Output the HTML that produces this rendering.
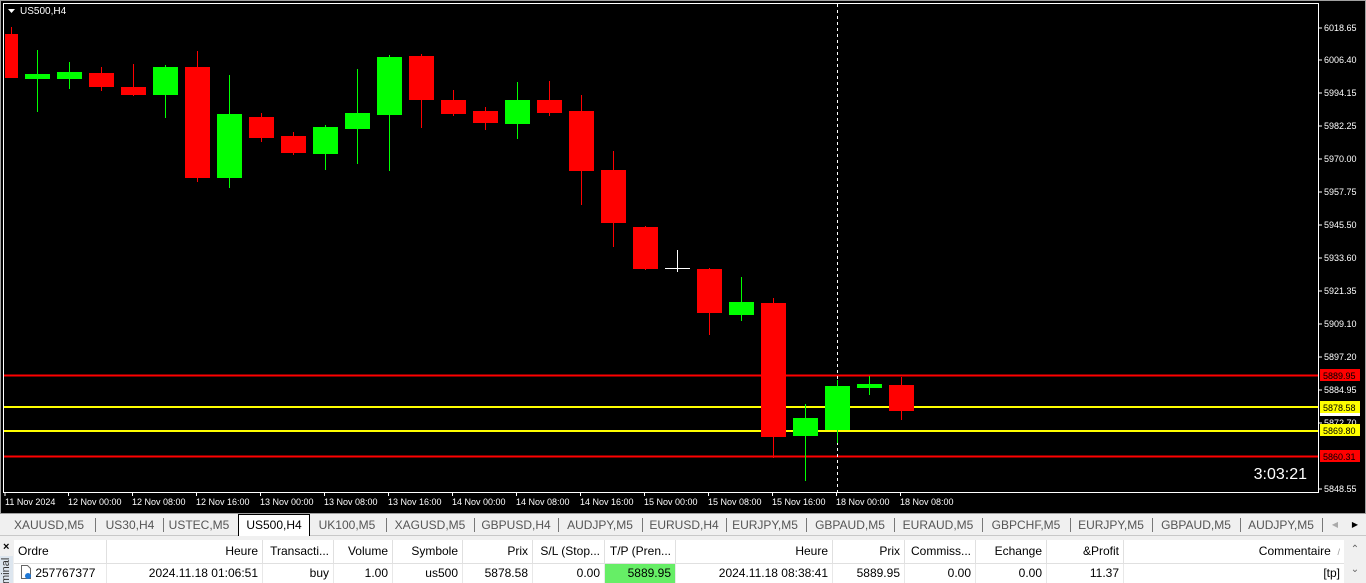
<!DOCTYPE html>
<html><head><meta charset="utf-8"><style>
*{margin:0;padding:0;box-sizing:border-box}
body{width:1366px;height:583px;overflow:hidden;background:#f0f0f0;font-family:"Liberation Sans",sans-serif;font-size:12px;position:relative}
svg{position:absolute;left:0;top:0}
.tabs{position:absolute;top:514px;left:0;width:1366px;height:22px;background:#f0f0f0;border-bottom:1px solid #c8c8c8}
.tab{position:absolute;top:3px;height:16px;color:#555;font-size:12px;line-height:16px;text-align:center}
.sep{position:absolute;top:4px;width:1px;height:14px;background:#777}
.act{position:absolute;left:238px;top:0;width:72px;height:22px;background:#fff;border:1px solid #000;border-bottom:none;text-align:center;line-height:20px;color:#000}
.tbl{position:absolute;top:540px;left:14px;width:1330px;height:43px;background:#fff}
.c{position:absolute;height:24px;line-height:23px;padding:0 4px;white-space:nowrap;overflow:hidden;font-size:12px;color:#000;border-right:1px solid #e0e0e0;text-align:right}
.r{top:24px;height:19px;line-height:18px;border-right:1px solid #e8e8e8}
</style></head><body>
<svg width="1366" height="514" xmlns="http://www.w3.org/2000/svg" font-family="Liberation Sans" font-size="9">
<rect x="0" y="0" width="1366" height="514" fill="#000"/>
<rect x="0" y="0" width="1366" height="514" fill="none" stroke="#a0a0a0" stroke-width="2"/>
<rect x="3.5" y="3.5" width="1315" height="489" fill="none" stroke="#fff"/>
<polygon points="8,9 15,9 11.5,13" fill="#fff"/>
<text x="20" y="14" fill="#fff" font-size="10">US500,H4</text>
<!-- horizontal lines -->
<line x1="4" y1="375.5" x2="1318" y2="375.5" stroke="#f00" stroke-width="2"/>
<line x1="4" y1="407" x2="1318" y2="407" stroke="#ff0" stroke-width="2"/>
<line x1="4" y1="431" x2="1318" y2="431" stroke="#ff0" stroke-width="2"/>
<line x1="4" y1="456.5" x2="1318" y2="456.5" stroke="#f00" stroke-width="2"/>
<line x1="837.5" y1="4" x2="837.5" y2="492" stroke="#fff" stroke-dasharray="3,3"/>
<g stroke-width="1">
<!-- red -->
<g fill="#f00" stroke="#f00">
<line x1="11.5" y1="27" x2="11.5" y2="78"/><rect x="5" y="34" width="13" height="44" stroke="none"/>
<line x1="101.5" y1="67" x2="101.5" y2="91"/><rect x="89" y="73" width="25" height="14" stroke="none"/>
<line x1="133.5" y1="64" x2="133.5" y2="96"/><rect x="121" y="87" width="25" height="8" stroke="none"/>
<line x1="197.5" y1="51" x2="197.5" y2="182"/><rect x="185" y="67" width="25" height="111" stroke="none"/>
<line x1="261.5" y1="113" x2="261.5" y2="142"/><rect x="249" y="117" width="25" height="21" stroke="none"/>
<line x1="293.5" y1="132" x2="293.5" y2="155"/><rect x="281" y="136" width="25" height="17" stroke="none"/>
<line x1="421.5" y1="54" x2="421.5" y2="128"/><rect x="409" y="56" width="25" height="44" stroke="none"/>
<line x1="453.5" y1="90" x2="453.5" y2="116"/><rect x="441" y="100" width="25" height="14" stroke="none"/>
<line x1="485.5" y1="107" x2="485.5" y2="130"/><rect x="473" y="111" width="25" height="12" stroke="none"/>
<line x1="549.5" y1="81" x2="549.5" y2="116"/><rect x="537" y="100" width="25" height="13" stroke="none"/>
<line x1="581.5" y1="95" x2="581.5" y2="205"/><rect x="569" y="111" width="25" height="60" stroke="none"/>
<line x1="613.5" y1="151" x2="613.5" y2="247"/><rect x="601" y="170" width="25" height="53" stroke="none"/>
<line x1="645.5" y1="226" x2="645.5" y2="270"/><rect x="633" y="227" width="25" height="42" stroke="none"/>
<line x1="709.5" y1="268" x2="709.5" y2="335"/><rect x="697" y="269" width="25" height="44" stroke="none"/>
<line x1="773.5" y1="298" x2="773.5" y2="458"/><rect x="761" y="303" width="25" height="134" stroke="none"/>
<line x1="901.5" y1="377" x2="901.5" y2="420"/><rect x="889" y="385" width="25" height="26" stroke="none"/>
</g>
<g fill="#0f0" stroke="#0f0">
<line x1="37.5" y1="50" x2="37.5" y2="112"/><rect x="25" y="74" width="25" height="5" stroke="none"/>
<line x1="69.5" y1="62" x2="69.5" y2="89"/><rect x="57" y="72" width="25" height="7" stroke="none"/>
<line x1="165.5" y1="65" x2="165.5" y2="118"/><rect x="153" y="67" width="25" height="28" stroke="none"/>
<line x1="229.5" y1="75" x2="229.5" y2="188"/><rect x="217" y="114" width="25" height="64" stroke="none"/>
<line x1="325.5" y1="125" x2="325.5" y2="170"/><rect x="313" y="127" width="25" height="27" stroke="none"/>
<line x1="357.5" y1="69" x2="357.5" y2="164"/><rect x="345" y="113" width="25" height="16" stroke="none"/>
<line x1="389.5" y1="55" x2="389.5" y2="171"/><rect x="377" y="57" width="25" height="58" stroke="none"/>
<line x1="517.5" y1="82" x2="517.5" y2="139"/><rect x="505" y="100" width="25" height="24" stroke="none"/>
<line x1="741.5" y1="277" x2="741.5" y2="321"/><rect x="729" y="302" width="25" height="13" stroke="none"/>
<line x1="805.5" y1="404" x2="805.5" y2="481"/><rect x="793" y="418" width="25" height="18" stroke="none"/>
<line x1="837.5" y1="380" x2="837.5" y2="443"/><rect x="825" y="386" width="25" height="44" stroke="none"/>
<line x1="869.5" y1="376" x2="869.5" y2="395"/><rect x="857" y="384" width="25" height="4" stroke="none"/>
</g>
<line x1="677.5" y1="250" x2="677.5" y2="272" stroke="#fff"/><line x1="665" y1="268.5" x2="690" y2="268.5" stroke="#fff"/>
</g>
<!-- price axis -->
<g fill="#fff">
<g stroke="#fff"><line x1="1318" y1="28" x2="1322" y2="28"/><line x1="1318" y1="60" x2="1322" y2="60"/><line x1="1318" y1="93" x2="1322" y2="93"/><line x1="1318" y1="126" x2="1322" y2="126"/><line x1="1318" y1="159" x2="1322" y2="159"/><line x1="1318" y1="192" x2="1322" y2="192"/><line x1="1318" y1="225" x2="1322" y2="225"/><line x1="1318" y1="258" x2="1322" y2="258"/><line x1="1318" y1="291" x2="1322" y2="291"/><line x1="1318" y1="324" x2="1322" y2="324"/><line x1="1318" y1="357" x2="1322" y2="357"/><line x1="1318" y1="390" x2="1322" y2="390"/><line x1="1318" y1="423" x2="1322" y2="423"/><line x1="1318" y1="489" x2="1322" y2="489"/></g>
<text x="1324" y="31">6018.65</text><text x="1324" y="63">6006.40</text><text x="1324" y="96">5994.15</text><text x="1324" y="129">5982.25</text><text x="1324" y="162">5970.00</text><text x="1324" y="195">5957.75</text><text x="1324" y="228">5945.50</text><text x="1324" y="261">5933.60</text><text x="1324" y="294">5921.35</text><text x="1324" y="327">5909.10</text><text x="1324" y="360">5897.20</text><text x="1324" y="393">5884.95</text><text x="1324" y="426">5872.70</text><text x="1324" y="492">5848.55</text>
</g>
<rect x="1320" y="369" width="40" height="12" fill="#f00"/><text x="1323" y="379" fill="#000">5889.95</text>
<rect x="1320" y="410" width="40" height="6" fill="#fff"/>
<rect x="1320" y="401" width="40" height="12" fill="#ff0"/><text x="1323" y="411" fill="#000">5878.58</text>
<rect x="1320" y="424" width="40" height="12" fill="#ff0"/><text x="1323" y="434" fill="#000">5869.80</text>
<rect x="1320" y="450" width="40" height="12" fill="#f00"/><text x="1323" y="460" fill="#000">5860.31</text>
<text x="1307" y="479" fill="#fff" font-size="16" text-anchor="end">3:03:21</text>
<!-- time axis -->
<g stroke="#fff"><line x1="5" y1="492" x2="5" y2="496"/><line x1="68.5" y1="492" x2="68.5" y2="496"/><line x1="132.5" y1="492" x2="132.5" y2="496"/><line x1="196.5" y1="492" x2="196.5" y2="496"/><line x1="260.5" y1="492" x2="260.5" y2="496"/><line x1="324.5" y1="492" x2="324.5" y2="496"/><line x1="388.5" y1="492" x2="388.5" y2="496"/><line x1="452.5" y1="492" x2="452.5" y2="496"/><line x1="516.5" y1="492" x2="516.5" y2="496"/><line x1="580.5" y1="492" x2="580.5" y2="496"/><line x1="644.5" y1="492" x2="644.5" y2="496"/><line x1="708.5" y1="492" x2="708.5" y2="496"/><line x1="772.5" y1="492" x2="772.5" y2="496"/><line x1="836.5" y1="492" x2="836.5" y2="496"/><line x1="900.5" y1="492" x2="900.5" y2="496"/></g>
<g fill="#fff"><text x="5" y="505">11 Nov 2024</text><text x="68" y="505">12 Nov 00:00</text><text x="132" y="505">12 Nov 08:00</text><text x="196" y="505">12 Nov 16:00</text><text x="260" y="505">13 Nov 00:00</text><text x="324" y="505">13 Nov 08:00</text><text x="388" y="505">13 Nov 16:00</text><text x="452" y="505">14 Nov 00:00</text><text x="516" y="505">14 Nov 08:00</text><text x="580" y="505">14 Nov 16:00</text><text x="644" y="505">15 Nov 00:00</text><text x="708" y="505">15 Nov 08:00</text><text x="772" y="505">15 Nov 16:00</text><text x="836" y="505">18 Nov 00:00</text><text x="900" y="505">18 Nov 08:00</text></g>
</svg>
<div class="tabs">
<div class="tab" style="left:14px;width:70px">XAUUSD,M5</div><div class="sep" style="left:95px"></div>
<div class="tab" style="left:100px;width:60px">US30,H4</div><div class="sep" style="left:163px"></div>
<div class="tab" style="left:166px;width:66px">USTEC,M5</div>
<div class="act">US500,H4</div>
<div class="tab" style="left:314px;width:66px">UK100,M5</div><div class="sep" style="left:386px"></div>
<div class="tab" style="left:390px;width:80px">XAGUSD,M5</div><div class="sep" style="left:474px"></div>
<div class="tab" style="left:478px;width:76px">GBPUSD,H4</div><div class="sep" style="left:558px"></div>
<div class="tab" style="left:562px;width:76px">AUDJPY,M5</div><div class="sep" style="left:642px"></div>
<div class="tab" style="left:646px;width:76px">EURUSD,H4</div><div class="sep" style="left:726px"></div>
<div class="tab" style="left:728px;width:74px">EURJPY,M5</div><div class="sep" style="left:806px"></div>
<div class="tab" style="left:810px;width:80px">GBPAUD,M5</div><div class="sep" style="left:894px"></div>
<div class="tab" style="left:898px;width:80px">EURAUD,M5</div><div class="sep" style="left:982px"></div>
<div class="tab" style="left:986px;width:80px">GBPCHF,M5</div><div class="sep" style="left:1070px"></div>
<div class="tab" style="left:1074px;width:74px">EURJPY,M5</div><div class="sep" style="left:1152px"></div>
<div class="tab" style="left:1156px;width:80px">GBPAUD,M5</div><div class="sep" style="left:1240px"></div>
<div class="tab" style="left:1244px;width:74px">AUDJPY,M5</div><div class="sep" style="left:1322px"></div>
<div class="tab" style="left:1328px;width:14px;color:#aaa;font-size:8px">◀</div>
<div class="tab" style="left:1348px;width:14px;color:#000;font-size:8px">▶</div>
</div>
<div style="position:absolute;left:3px;top:541px;font-size:11px;font-weight:bold">×</div>
<div style="position:absolute;left:0;top:556px;width:13px;height:27px;background:#dde6ef;font-size:11px;color:#333;overflow:hidden"><div style="transform:rotate(-90deg);transform-origin:0 0;position:absolute;left:0;top:28px;white-space:nowrap">minal</div></div>
<div class="tbl">
<div style="position:absolute;left:0;top:23px;width:1330px;height:1px;background:#e0e0e0"></div>
<div class="c" style="left:0;width:93px;text-align:left">Ordre</div>
<div class="c" style="left:93px;width:156px">Heure</div>
<div class="c" style="left:249px;width:71px">Transacti...</div>
<div class="c" style="left:320px;width:59px">Volume</div>
<div class="c" style="left:379px;width:70px">Symbole</div>
<div class="c" style="left:449px;width:70px">Prix</div>
<div class="c" style="left:519px;width:72px">S/L (Stop...</div>
<div class="c" style="left:591px;width:71px">T/P (Pren...</div>
<div class="c" style="left:662px;width:157px">Heure</div>
<div class="c" style="left:819px;width:72px">Prix</div>
<div class="c" style="left:891px;width:71px">Commiss...</div>
<div class="c" style="left:962px;width:71px">Echange</div>
<div class="c" style="left:1033px;width:77px">&amp;Profit</div>
<div class="c" style="left:1110px;width:220px;border:none">Commentaire &nbsp;<span style="color:#999;font-size:9px">/</span></div>
<div class="c r" style="left:0;width:93px;text-align:left;padding-left:6px"><svg width="12" height="14" style="position:relative;vertical-align:-2px"><path d="M1.5 0.5h6l3 3v10h-9z" fill="#fff" stroke="#666"/><circle cx="8" cy="11" r="3" fill="#1e78d6"/></svg> 257767377</div>
<div class="c r" style="left:93px;width:156px">2024.11.18 01:06:51</div>
<div class="c r" style="left:249px;width:71px">buy</div>
<div class="c r" style="left:320px;width:59px">1.00</div>
<div class="c r" style="left:379px;width:70px">us500</div>
<div class="c r" style="left:449px;width:70px">5878.58</div>
<div class="c r" style="left:519px;width:72px">0.00</div>
<div class="c r" style="left:591px;width:71px;background:#66ee66">5889.95</div>
<div class="c r" style="left:662px;width:157px">2024.11.18 08:38:41</div>
<div class="c r" style="left:819px;width:72px">5889.95</div>
<div class="c r" style="left:891px;width:71px">0.00</div>
<div class="c r" style="left:962px;width:71px">0.00</div>
<div class="c r" style="left:1033px;width:77px">11.37</div>
<div class="c r" style="left:1110px;width:220px;border:none">[tp]</div>
</div>
<div style="position:absolute;left:1344px;top:540px;width:22px;height:43px;background:#f0f0f0;color:#666;font-size:10px;text-align:center;line-height:20px">⌃<br>⌄</div>
</body></html>
